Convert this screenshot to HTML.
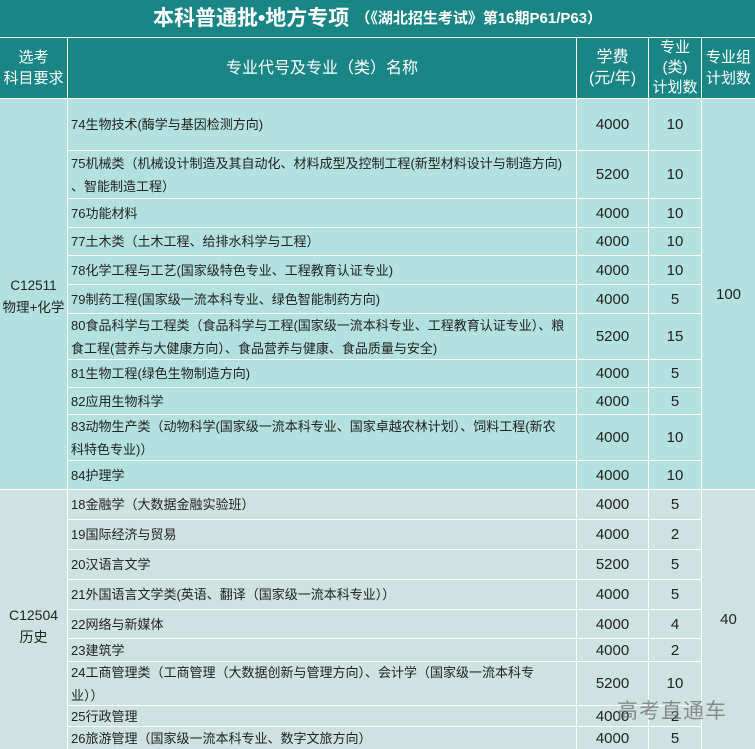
<!DOCTYPE html>
<html><head><meta charset="utf-8"><style>
body{margin:0;width:755px;height:749px;overflow:hidden;background:#fff;font-family:"Liberation Sans","Noto Sans CJK SC",sans-serif;}
.c{position:absolute;display:flex;align-items:center;box-sizing:border-box;font-size:13px;color:#222;overflow:hidden}
.a{background:#b3e1e0}.b{background:#cee3e1}
.n{padding-left:3px;line-height:23px;white-space:nowrap}
.m{justify-content:center;text-align:center;font-size:15px}
.h{background:#1a8585;color:#fff;justify-content:center;text-align:center;font-size:15px;line-height:21px}
</style></head><body>
<div class="c h" style="left:0;top:0;width:755px;height:37px;font-size:21px;font-weight:bold;letter-spacing:0">本科普通批•地方专项<span style="font-size:15px;margin-left:6px">（《湖北招生考试》第16期P61/P63）</span></div>
<div class="c h" style="left:0;top:38px;width:67px;height:60px">选考<br>科目要求</div>
<div class="c h" style="left:68px;top:38px;width:508px;height:60px;font-size:16px">专业代号及专业（类）名称</div>
<div class="c h" style="left:577px;top:38px;width:71px;height:60px;font-size:16px">学费<br>(元/年)</div>
<div class="c h" style="left:649px;top:38px;width:52px;height:60px;line-height:20px">专业<br>(类)<br>计划数</div>
<div class="c h" style="left:702px;top:38px;width:53px;height:60px">专业组<br>计划数</div>

<div class="c a m" style="left:0;top:99px;width:67px;height:390px;line-height:22px;padding-top:6px;font-size:13.5px">C12511<br>物理+化学</div>
<div class="c a m" style="left:702px;top:99px;width:53px;height:390px">100</div>
<div class="c b m" style="left:0;top:490px;width:67px;height:259px;line-height:22px;padding-top:12px;font-size:14px">C12504<br>历史</div>
<div class="c b m" style="left:702px;top:490px;width:53px;height:259px">40</div>

<div class="c a n" style="left:68px;top:99px;width:508px;height:51px">74生物技术(酶学与基因检测方向)</div><div class="c a m" style="left:577px;top:99px;width:71px;height:51px">4000</div><div class="c a m" style="left:649px;top:99px;width:52px;height:51px">10</div>
<div class="c a n" style="left:68px;top:151px;width:508px;height:47px">75机械类（机械设计制造及其自动化、材料成型及控制工程(新型材料设计与制造方向)<br>、智能制造工程）</div><div class="c a m" style="left:577px;top:151px;width:71px;height:47px">5200</div><div class="c a m" style="left:649px;top:151px;width:52px;height:47px">10</div>
<div class="c a n" style="left:68px;top:199px;width:508px;height:28px">76功能材料</div><div class="c a m" style="left:577px;top:199px;width:71px;height:28px">4000</div><div class="c a m" style="left:649px;top:199px;width:52px;height:28px">10</div>
<div class="c a n" style="left:68px;top:228px;width:508px;height:27px">77土木类（土木工程、给排水科学与工程）</div><div class="c a m" style="left:577px;top:228px;width:71px;height:27px">4000</div><div class="c a m" style="left:649px;top:228px;width:52px;height:27px">10</div>
<div class="c a n" style="left:68px;top:256px;width:508px;height:28px">78化学工程与工艺(国家级特色专业、工程教育认证专业)</div><div class="c a m" style="left:577px;top:256px;width:71px;height:28px">4000</div><div class="c a m" style="left:649px;top:256px;width:52px;height:28px">10</div>
<div class="c a n" style="left:68px;top:285px;width:508px;height:28px">79制药工程(国家级一流本科专业、绿色智能制药方向)</div><div class="c a m" style="left:577px;top:285px;width:71px;height:28px">4000</div><div class="c a m" style="left:649px;top:285px;width:52px;height:28px">5</div>
<div class="c a n" style="left:68px;top:314px;width:508px;height:45px">80食品科学与工程类（食品科学与工程(国家级一流本科专业、工程教育认证专业）、粮<br>食工程(营养与大健康方向）、食品营养与健康、食品质量与安全)</div><div class="c a m" style="left:577px;top:314px;width:71px;height:45px">5200</div><div class="c a m" style="left:649px;top:314px;width:52px;height:45px">15</div>
<div class="c a n" style="left:68px;top:360px;width:508px;height:27px">81生物工程(绿色生物制造方向)</div><div class="c a m" style="left:577px;top:360px;width:71px;height:27px">4000</div><div class="c a m" style="left:649px;top:360px;width:52px;height:27px">5</div>
<div class="c a n" style="left:68px;top:388px;width:508px;height:26px">82应用生物科学</div><div class="c a m" style="left:577px;top:388px;width:71px;height:26px">4000</div><div class="c a m" style="left:649px;top:388px;width:52px;height:26px">5</div>
<div class="c a n" style="left:68px;top:415px;width:508px;height:45px">83动物生产类（动物科学(国家级一流本科专业、国家卓越农林计划）、饲料工程(新农<br>科特色专业)）</div><div class="c a m" style="left:577px;top:415px;width:71px;height:45px">4000</div><div class="c a m" style="left:649px;top:415px;width:52px;height:45px">10</div>
<div class="c a n" style="left:68px;top:461px;width:508px;height:28px">84护理学</div><div class="c a m" style="left:577px;top:461px;width:71px;height:28px">4000</div><div class="c a m" style="left:649px;top:461px;width:52px;height:28px">10</div>

<div class="c b n" style="left:68px;top:490px;width:508px;height:29px">18金融学（大数据金融实验班）</div><div class="c b m" style="left:577px;top:490px;width:71px;height:29px">4000</div><div class="c b m" style="left:649px;top:490px;width:52px;height:29px">5</div>
<div class="c b n" style="left:68px;top:520px;width:508px;height:29px">19国际经济与贸易</div><div class="c b m" style="left:577px;top:520px;width:71px;height:29px">4000</div><div class="c b m" style="left:649px;top:520px;width:52px;height:29px">2</div>
<div class="c b n" style="left:68px;top:550px;width:508px;height:29px">20汉语言文学</div><div class="c b m" style="left:577px;top:550px;width:71px;height:29px">5200</div><div class="c b m" style="left:649px;top:550px;width:52px;height:29px">5</div>
<div class="c b n" style="left:68px;top:580px;width:508px;height:29px">21外国语言文学类(英语、翻译（国家级一流本科专业））</div><div class="c b m" style="left:577px;top:580px;width:71px;height:29px">4000</div><div class="c b m" style="left:649px;top:580px;width:52px;height:29px">5</div>
<div class="c b n" style="left:68px;top:610px;width:508px;height:28px">22网络与新媒体</div><div class="c b m" style="left:577px;top:610px;width:71px;height:28px">4000</div><div class="c b m" style="left:649px;top:610px;width:52px;height:28px">4</div>
<div class="c b n" style="left:68px;top:639px;width:508px;height:22px">23建筑学</div><div class="c b m" style="left:577px;top:639px;width:71px;height:22px">4000</div><div class="c b m" style="left:649px;top:639px;width:52px;height:22px">2</div>
<div class="c b n" style="left:68px;top:662px;width:508px;height:43px">24工商管理类（工商管理（大数据创新与管理方向）、会计学（国家级一流本科专<br>业））</div><div class="c b m" style="left:577px;top:662px;width:71px;height:43px">5200</div><div class="c b m" style="left:649px;top:662px;width:52px;height:43px">10</div>
<div class="c b n" style="left:68px;top:706px;width:508px;height:20px">25行政管理</div><div class="c b m" style="left:577px;top:706px;width:71px;height:20px">4000</div><div class="c b m" style="left:649px;top:706px;width:52px;height:20px">2</div>
<div class="c b n" style="left:68px;top:727px;width:508px;height:22px">26旅游管理（国家级一流本科专业、数字文旅方向）</div><div class="c b m" style="left:577px;top:727px;width:71px;height:22px">4000</div><div class="c b m" style="left:649px;top:727px;width:52px;height:22px">5</div>

<div style="position:absolute;left:617px;top:695px;font-size:21px;color:rgba(110,110,110,0.75);font-family:'Liberation Sans','Noto Sans CJK SC',sans-serif;letter-spacing:1px">高考直通车</div>
</body></html>
